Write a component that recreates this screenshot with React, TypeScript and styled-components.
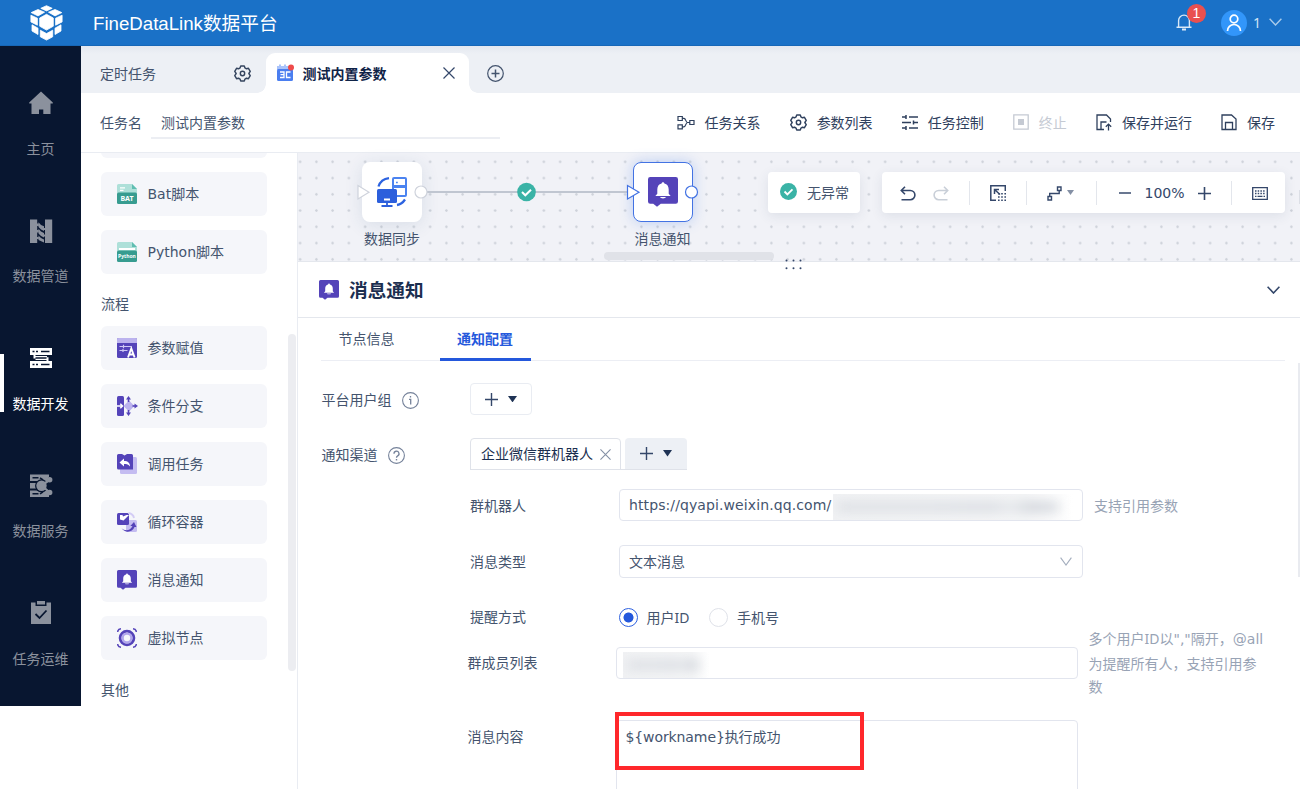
import React from "react";
import styled, { createGlobalStyle, css } from "styled-components";

const GlobalStyle = createGlobalStyle`
  * { box-sizing: border-box; }
  body {
    margin: 0;
    background: #fff;
    font-family: "Noto Sans", "Noto Sans CJK SC", sans-serif;
    font-size: 14px;
    line-height: 20px;
    color: #44546e;
    overflow: hidden;
  }
  svg { display: block; flex: none; }
`;

const Page = styled.div`
  width: 1300px;
  height: 789px;
  display: flex;
  flex-direction: column;
  overflow: hidden;
`;

/* ---------- header ---------- */
const Header = styled.header`
  height: 46px;
  flex: none;
  display: flex;
  align-items: center;
  padding: 0 18px 0 30px;
  background: #1a71c7;
  border-bottom: 1px solid #1667b8;
  color: #fff;
`;
const Brand = styled.h1`
  flex: 1;
  margin: 2px 0 0 30px;
  font: 400 18.67px/24px "Liberation Sans", "Noto Sans CJK SC", sans-serif;
`;
const BellButton = styled.div`
  position: relative;
  width: 18px;
  margin: -2px 28px 0 0;
  color: #d9e8f7;
`;
const CountBadge = styled.span`
  position: absolute;
  left: 12px;
  top: -9px;
  width: 19px;
  height: 19px;
  border-radius: 50%;
  background: #e9504f;
  color: #fff;
  font: 400 14px/19px "Liberation Sans", sans-serif;
  text-align: center;
`;
const Avatar = styled.div`
  width: 26px;
  height: 26px;
  border-radius: 50%;
  background: #3296fa;
  display: flex;
  align-items: center;
  justify-content: center;
`;
const UserName = styled.span`
  width: 8px;
  margin: 0 8px 0 6px;
  font-size: 14px;
  color: #d3e4f5;
`;
const UserArrow = styled.div`
  margin-top: -2px;
  color: #a9cbea;
`;

/* ---------- side navigation ---------- */
const Body = styled.div`
  flex: 1;
  min-height: 0;
  display: flex;
  align-items: flex-start;
`;
const SideNav = styled.nav`
  width: 81px;
  height: 660px;
  flex: none;
  background: #081630;
  overflow: hidden;
`;
const NavItem = styled.div<{ $active?: boolean }>`
  position: relative;
  height: 127.5px;
  padding-top: 45px;
  display: flex;
  flex-direction: column;
  align-items: center;
  gap: 23.5px;
  color: ${(p) => (p.$active ? "#fff" : "#8b919d")};
  ${(p) =>
    p.$active &&
    css`
      &::before {
        content: "";
        position: absolute;
        left: 0;
        top: 53px;
        width: 4px;
        height: 58px;
        background: #fff;
      }
    `}
`;

const Workspace = styled.main`
  flex: 1;
  min-width: 0;
  height: 743px;
  display: flex;
  flex-direction: column;
`;

/* ---------- task tabs ---------- */
const TabStrip = styled.div`
  height: 47px;
  flex: none;
  display: flex;
  align-items: center;
  padding: 7px 0 0 19px;
  background: linear-gradient(#e4e8f0, #edf0f5 8px, #edf0f5);
`;
const StripLabel = styled.span`
  width: 134px;
  padding-top: 2px;
`;
const StripGear = styled.div`
  color: #34445e;
`;
const TaskTab = styled.div`
  position: relative;
  width: 203px;
  height: 40px;
  margin: 0 18px 0 15px;
  padding: 0 14px 0 11px;
  display: flex;
  align-items: center;
  border-radius: 9px 9px 0 0;
  background: #fff;
  color: #0f2347;
  font-weight: 700;
  &::before,
  &::after {
    content: "";
    position: absolute;
    bottom: 0;
    width: 9px;
    height: 9px;
  }
  &::before {
    left: -9px;
    background: radial-gradient(circle at 0 0, transparent 8.5px, #fff 9px);
  }
  &::after {
    right: -9px;
    background: radial-gradient(circle at 100% 0, transparent 8.5px, #fff 9px);
  }
`;
const TaskTabTitle = styled.span`
  flex: 1;
  margin: 1px 0 0 8.5px;
`;

/* ---------- task toolbar ---------- */
const TaskBar = styled.div`
  height: 60px;
  flex: none;
  display: flex;
  align-items: center;
  padding: 0 25px 0 19px;
  border-bottom: 1px solid #e9ecf2;
`;
const TaskNameInput = styled.div`
  width: 349px;
  height: 32px;
  margin: 1px auto 0 9px;
  padding: 6px 10px 0;
  border-bottom: 2px solid #eceef3;
`;
const ToolList = styled.div`
  display: flex;
  gap: 29.1px;
`;
const Tool = styled.div<{ $disabled?: boolean }>`
  display: flex;
  align-items: center;
  gap: 10px;
  color: ${(p) => (p.$disabled ? "#c5cad3" : "#2f405d")};
`;

/* ---------- node palette ---------- */
const Split = styled.div`
  flex: 1;
  min-height: 0;
  display: flex;
  align-items: flex-start;
`;
const Palette = styled.aside`
  width: 216px;
  height: 553px;
  flex: none;
  display: flex;
  justify-content: space-between;
  padding: 0 1px 0 20px;
  overflow: hidden;
`;
const PaletteList = styled.div`
  width: 166px;
  margin-top: -39px;
  display: flex;
  flex-direction: column;
  gap: 14px;
`;
const PaletteItem = styled.div`
  height: 44px;
  flex: none;
  display: flex;
  align-items: center;
  padding: 0 16px;
  border-radius: 6px;
  background: #f5f6fa;
`;
const PaletteIcon = styled.span`
  width: 30.5px;
`;
const PaletteHeading = styled.div`
  height: 24px;
  flex: none;
  padding-top: 6px;
`;
const PaletteScroll = styled.div`
  width: 8px;
  height: 337px;
  margin-top: 181px;
  border-radius: 4px;
  background: #ecedf1;
`;

/* ---------- canvas ---------- */
const Right = styled.section`
  flex: 1;
  min-width: 0;
  height: 636px;
  display: flex;
  flex-direction: column;
  border-left: 1px solid #e9ecf2;
`;
const Canvas = styled.div`
  position: relative;
  height: 109px;
  flex: none;
  background-color: #f1f2f7;
  background-image: radial-gradient(circle at 50% 50%, #cdd1d9 0.9px, transparent 1.5px);
  background-size: 16.25px 16.25px;
  background-position: -6px 0.7px;
  border-bottom: 1px solid #e4e7ed;
`;
const NodeBox = styled.div<{ $x: number; $selected?: boolean }>`
  position: absolute;
  left: ${(p) => p.$x}px;
  top: 9px;
  width: 60px;
  height: 60px;
  display: flex;
  align-items: center;
  justify-content: center;
  border-radius: 8px;
  background: #fff;
  ${(p) =>
    p.$selected
      ? css`
          border: 1px solid #4373e3;
          box-shadow: 0 0 14px rgba(67, 125, 235, 0.32);
        `
      : css`
          box-shadow: 0 3px 18px rgba(40, 80, 120, 0.12);
        `}
`;
const NodeLabel = styled.div<{ $x: number }>`
  position: absolute;
  left: ${(p) => p.$x}px;
  top: 76px;
  width: 80px;
  text-align: center;
`;
const Wires = styled.svg`
  position: absolute;
  left: 1px;
  top: 0;
`;
const CanvasScroll = styled.div`
  position: absolute;
  left: 305.5px;
  top: 99px;
  width: 170.5px;
  height: 8px;
  border-radius: 4px;
  background: #e0e2e8;
`;
const CanvasSideScroll = styled.div`
  position: absolute;
  right: 0;
  top: 37px;
  width: 1px;
  height: 14px;
  background: #dcdfe6;
`;
const FloatingTools = styled.div`
  position: absolute;
  right: 15px;
  top: 19px;
  display: flex;
  gap: 22px;
`;
const FloatCard = styled.div`
  height: 41px;
  display: flex;
  align-items: center;
  border-radius: 4px;
  background: #fff;
  box-shadow: 0 3px 12px rgba(50, 65, 95, 0.1);
`;
const StatusCard = styled(FloatCard)`
  width: 92px;
  gap: 10px;
  padding: 1px 0 0 12px;
  svg { margin-top: -4px; }
`;
const ZoomCard = styled(FloatCard)`
  width: 403px;
  padding: 1px 17px 0 18px;
  justify-content: space-between;
  color: #34476a;
`;
const ToolPair = styled.div<{ $gap: number; $before?: number; $after?: number }>`
  display: flex;
  align-items: center;
  gap: ${(p) => p.$gap}px;
  padding: 0 ${(p) => p.$after ?? 0}px 0 ${(p) => p.$before ?? 0}px;
`;
const Divider = styled.i`
  width: 1px;
  height: 24px;
  background: #e3e6ec;
`;
const ZoomValue = styled.span`
  width: 41px;
  display: flex;
  justify-content: center;
  font-family: "DejaVu Sans", sans-serif;
  font-size: 14px;
`;
const Grip = styled.svg`
  position: absolute;
  left: 487px;
  top: 106px;
  z-index: 2;
`;

/* ---------- settings panel ---------- */
const PanelHead = styled.div`
  height: 56px;
  flex: none;
  display: flex;
  align-items: center;
  padding: 0 20px 0 21px;
  border-bottom: 1px solid #e4e7ed;
  color: #34476a;
`;
const PanelTitle = styled.h2`
  flex: 1;
  margin: 0 0 0 10px;
  font-size: 18.67px;
  line-height: 26px;
  font-weight: 700;
  color: #1c2f50;
`;
const PanelTabs = styled.div`
  height: 43px;
  flex: none;
  display: flex;
  margin: 0 15px 0 23px;
  border-bottom: 1px solid #eceef4;
`;
const PanelTab = styled.div<{ $active?: boolean }>`
  width: 91px;
  height: 43px;
  margin-right: 27.5px;
  padding-top: 11px;
  text-align: center;
  ${(p) =>
    p.$active &&
    css`
      color: #2458dc;
      font-weight: 700;
      border-bottom: 3px solid #2458dc;
    `}
`;
const FormWrap = styled.div`
  flex: 1;
  min-height: 0;
  display: flex;
  justify-content: space-between;
`;
const Form = styled.div`
  width: 985px;
  padding: 22px 0 0 23.5px;
`;
const Row = styled.div<{ $h: number; $gap: number; $indent?: number }>`
  height: ${(p) => p.$h}px;
  margin-bottom: ${(p) => p.$gap}px;
  padding-left: ${(p) => p.$indent ?? 0}px;
  display: flex;
  align-items: center;
`;
const FieldLabel = styled.label<{ $w: number; $drop?: boolean }>`
  width: ${(p) => p.$w}px;
  flex: none;
  display: flex;
  align-items: center;
  gap: 10px;
  padding-top: ${(p) => (p.$drop ? 2 : 0)}px;
`;
const AddButton = styled.button<{ $filled?: boolean }>`
  width: 62px;
  height: 32px;
  display: flex;
  align-items: center;
  justify-content: center;
  gap: 10px;
  padding: 0;
  font: inherit;
  color: #34476a;
  ${(p) =>
    p.$filled
      ? css`
          margin-left: 4.5px;
          background: #edf0f5;
          border: 0;
          border-bottom: 1px solid #dfe2e9;
          border-radius: 4px 4px 0 0;
        `
      : css`
          background: #fff;
          border: 1px solid #e9ecf2;
          border-radius: 4px;
        `}
`;
const Channels = styled.div`
  display: flex;
  height: 32px;
  background: linear-gradient(#dfe2e9, #dfe2e9) bottom / 100% 1px no-repeat;
`;
const ChannelTab = styled.div`
  width: 150.5px;
  height: 32px;
  display: flex;
  align-items: center;
  justify-content: space-between;
  padding: 0 9px 0 10px;
  border: 1px solid #dfe2e9;
  border-radius: 4px 4px 0 0;
  color: #1c2f50;
`;
const Field = styled.div<{ $w: number }>`
  width: ${(p) => p.$w}px;
  height: 32px;
  flex: none;
  display: flex;
  align-items: center;
  padding: 0 10px 0 9px;
  border: 1px solid #e2e5ee;
  border-radius: 4px;
  background: #fff;
`;
const Select = styled(Field)`
  height: 33px;
  justify-content: space-between;
  svg { color: #a3adbd; }
`;
const Latin = styled.span<{ $spacing?: number }>`
  font-family: "DejaVu Sans", "Noto Sans CJK SC", sans-serif;
  letter-spacing: ${(p) => p.$spacing ?? 0}px;
`;
const Url = styled(Latin)`
  width: 204px;
  flex: none;
  white-space: nowrap;
`;
const Redacted = styled.div<{ $w: number; $from: number; $shift?: number }>`
  width: ${(p) => p.$w}px;
  height: 26px;
  margin: 3px 0 0 ${(p) => p.$shift ?? 0}px;
  flex: none;
  overflow: hidden;
  display: flex;
  align-items: center;
  background: linear-gradient(90deg, #f1f2f4, #f5f6f7 80%, #fff);
  &::before {
    content: "";
    flex: 1;
    height: 10px;
    margin: 0 ${(p) => p.$from}px 0 4px;
    background: linear-gradient(90deg, #dcdfe4, #dcdfe4 40%, #d8dbe1 70%, #e4e6ea 78%, #cdd1d8 88%, #d8dbe1);
    filter: blur(6px);
  }
`;
const Hint = styled.span`
  margin: 1px 0 0 11px;
  color: #98a3b5;
`;
const LongHint = styled.div`
  width: 180px;
  margin-left: 10.5px;
  line-height: 23.4px;
  color: #98a3b5;
`;
const Radio = styled.span<{ $on?: boolean }>`
  width: 19px;
  height: 19px;
  border-radius: 50%;
  border: 1px solid ${(p) => (p.$on ? "#2f62e0" : "#dfe2e9")};
  background: ${(p) =>
    p.$on ? "radial-gradient(circle, #2458dc 4.6px, #fff 5.4px)" : "#fff"};
`;
const RadioText = styled.span`
  margin: 1px 19.5px 0 9px;
`;
const ContentRow = styled.div`
  display: flex;
  padding-left: 146px;
`;
const ContentLabel = styled.label`
  width: 148.5px;
  padding-top: 7px;
`;
const TextArea = styled.div`
  position: relative;
  width: 462px;
  height: 90px;
  padding: 6px 8.5px;
  border: 1px solid #e2e5ee;
  border-radius: 4px;
`;
const Highlight = styled.div`
  position: absolute;
  left: -2px;
  top: -9px;
  width: 249px;
  height: 58px;
  border: 4px solid #ff272b;
`;
const PanelScroll = styled.div`
  width: 2px;
  height: 214px;
  margin-top: 2px;
  background: #e9ebf0;
`;

/* ---------- icons ---------- */
const line = (w = 1.4) => ({
  fill: "none",
  stroke: "currentColor",
  strokeWidth: w,
});

const Logo = () => (
  <svg width="33" height="36" viewBox="0 0 33 36" fill="#fff" stroke="#fff" strokeWidth=".8" strokeLinejoin="round">
    <path d="M16.500 9.300 23.300 13v8.200L16.500 25.100 9.700 21.200V13z" />
    <path d="M10.800 3.300 16.500.7l5.700 2.600L16.500 5.900z" />
    <path d="M1.200 7.600 8 4.500 14.500 7.200 8 10.900z" />
    <path d="M31.800 7.600 25 4.500 18.500 7.200 25 10.900z" />
    <path d="M.9 10.200 7.400 13.200V20.200L.9 16.900z" />
    <path d="M32.100 10.200 25.600 13.200V20.200L32.100 16.900z" />
    <path d="M2 19.800 8 23.200V29.500L2 26z" />
    <path d="M31 19.800 25 23.200V29.500L31 26z" />
    <path d="M10.300 25.200 16.500 28.600 22.700 25.200V31.800L16.500 35.100 10.300 31.800z" />
  </svg>
);
const Bell = () => (
  <svg width="18" height="18" viewBox="0 0 18 18" {...line(1.4)}>
    <path d="M1.500 14.200h15M3.600 14V7.500a5.400 5.400 0 0 1 10.800 0V14" />
    <path d="M7 16.500h4" strokeWidth="2" />
  </svg>
);
const Person = () => (
  <svg width="16" height="18" viewBox="0 0 16 18" {...line(1.7)}>
    <circle cx="8" cy="5" r="3.8" />
    <path d="M1.500 17a6.500 6.500 0 0 1 13 0" />
  </svg>
);
const Chevron = ({ w = 13, h = 8, sw = 1.4 }: { w?: number; h?: number; sw?: number }) => (
  <svg width={w} height={h} viewBox={`0 0 ${w} ${h}`} {...line(sw)}>
    <path d={`M.6.7 ${w / 2} ${h - 1} ${w - 0.6}.7`} />
  </svg>
);
const HomeIcon = () => (
  <svg width="24" height="24" viewBox="0 0 24 24" fill="currentColor">
    <path d="M12 .5 23.800 11.500V12.500H21.500V23H14.300V18.500H10V23H2.500V12.500H.2V11.500z" />
  </svg>
);
const PipeIcon = () => (
  <svg width="24" height="24" viewBox="0 0 24 24">
    <path fill="currentColor" d="M1 .5h7.200V24H1zM16 .5h7.200V24H16z" />
    <path fill="currentColor" d="M9.500 3.200 12 6l3 1.200V12L12 10.500 9.500 8zM9.500 9.800 12 12.500l3 1.500v4.500L12 17l-2.500-2.500zM9.500 16.500 12 19l3 1.500v3L9.500 21z" />
    <path fill="currentColor" d="M8 4.500h1.800v2.500H8zM14.500 9H16v2h-1.500zM8 11h1.800v2.500H8zM14.500 15.500H16v2h-1.500zM8 18h1.800v2H8z" />
  </svg>
);
const DevIcon = () => (
  <svg width="24" height="24" viewBox="0 0 24 24">
    <path fill="currentColor" d="M1 2h22v7H1zM1 15h22v7H1zM5 10h13v1.300H5zM6.500 12.700H19V14H6.500z" />
    <path fill="currentColor" d="M4.500 8.500h2v4h-2zM17.500 11.300h2V16h-2z" />
    <path d="M3.500 5.500h2M7 5.500h2M12 5.500h8.500M3.500 18.500h2M7 18.500h2M12 18.500h8.500" stroke="#081630" strokeWidth="1.700" />
  </svg>
);
const ServiceIcon = () => (
  <svg width="24" height="24" viewBox="0 0 24 24">
    <path fill="currentColor" d="M1 .5h20l-3 6.500H1zM1 9h6v5.500H1zM1 16.500h17l3 6.500H1z" />
    <path d="M3.500 3.800h6M11 3.800l3 2M3.500 19.800h6M11 19.800l3-2" stroke="#081630" strokeWidth="1.600" />
    <circle cx="12.500" cy="11.800" r="6.500" fill="#081630" />
    <path fill="#081630" d="M20 0h4v24h-4z" />
    <circle cx="12.500" cy="11.800" r="5.200" fill="currentColor" />
    <path d="m14 10.500 6.500-4.500M14 12.500l6.500 6" stroke="currentColor" strokeWidth="2.200" />
    <circle cx="20.700" cy="5.800" r="2.700" fill="currentColor" />
    <circle cx="20.700" cy="18.500" r="2.700" fill="currentColor" />
  </svg>
);
const OpsIcon = () => (
  <svg width="24" height="24" viewBox="0 0 24 24">
    <path fill="currentColor" d="M2 1.500h4.500V5h11V1.500H22v21.500H2z" />
    <path fill="currentColor" d="M8 0h8v3.500H8z" />
    <path d="m6.500 13 4 4 7-7.500" fill="none" stroke="#081630" strokeWidth="1.800" />
  </svg>
);
const Gear = ({ size = 17 }: { size?: number }) => (
  <svg width={size} height={size} viewBox="0 0 18 18" {...line(1.5)} strokeLinejoin="round">
    <path d="M7.100 1h3.800l.7 2.100 1.600.9 2.100-.5 1.900 3.300L15.700 9l1.500 2.200-1.900 3.300-2.100-.5-1.600.9-.7 2.100H7.100l-.7-2.100-1.600-.9-2.100.5L.8 11.200 2.300 9 .8 6.800l1.900-3.300 2.100.5 1.600-.9z" />
    <circle cx="9" cy="9" r="2.300" />
  </svg>
);
const TaskIcon = () => (
  <svg width="17" height="18" viewBox="0 0 17 18">
    <path fill="#a9c3fa" d="M0 2h2V.5h2V2h3V.5h2V2h6v4H0z" />
    <rect y="5" width="16" height="12" rx="1.500" fill="#4a7ef0" />
    <path d="M3 8h4v5.500H3M3.500 10.700H7M13.500 8H9.500v5.500h4" fill="none" stroke="#fff" strokeWidth="1.300" />
    <circle cx="14" cy="3.500" r="3" fill="#ee4b4b" />
  </svg>
);
const Cross = ({ size = 12, w = 1.2, color = "#34476a" }: { size?: number; w?: number; color?: string }) => (
  <svg width={size} height={size} viewBox="0 0 12 12" {...line(w)} color={color}>
    <path d="m.5.5 11 11M11.500.5l-11 11" />
  </svg>
);
const PlusCircle = () => (
  <svg width="17" height="17" viewBox="0 0 17 17" {...line(1.2)}>
    <circle cx="8.500" cy="8.500" r="7.800" />
    <path d="M8.500 4.500v8M4.500 8.500h8" strokeWidth="1.500" />
  </svg>
);
const RelationIcon = () => (
  <svg width="18" height="16" viewBox="0 0 18 16" {...line(1.2)}>
    <path d="M1 1.500h4.300v4H1zM1 9.800h4.300v4H1zM12.800 5.500h4.200v4h-4.200zM5.300 3.300h1.700c2 0 1.500 4.200 3.500 4.200h2.300M5.300 11.800h1.700c2 0 1.500-4.300 3.500-4.300" />
  </svg>
);
const ControlIcon = () => (
  <svg width="16" height="16" viewBox="0 0 16 16" {...line(1.5)}>
    <path d="M0 2h4.500M7 2h9M0 7.500h9M11.500 7.500H16M0 13h4.500M7 13h9M4 0v4M11.500 5.500v4M4 11v4" />
  </svg>
);
const StopIcon = () => (
  <svg width="16" height="17" viewBox="0 0 16 17" {...line(1.3)}>
    <path d="M.8.8h14.400v14.400H.8z" />
    <path d="M5 5h6v6H5z" fill="currentColor" stroke="none" />
  </svg>
);
const SaveIcon = ({ run }: { run?: boolean }) => (
  <svg width="16" height="18" viewBox="0 0 16 18" {...line(1.3)}>
    {run ? (
      <>
        <path d="M8 15.500H1V1h9.500L14.500 5v3M5 15V8h5.500" />
        <path d="M12.500 16.500v-6M9.800 12.800l2.700-2.700 2.700 2.700" />
      </>
    ) : (
      <path d="M1 1h9.500L15 5v10.500H1zM4.500 15.500V8.500h7v7" />
    )}
  </svg>
);
const CheckDot = ({ size = 18 }: { size?: number }) => (
  <svg width={size} height={size} viewBox="0 0 18 18">
    <circle cx="9" cy="9" r="9" fill="#3ab3a6" />
    <path d="m4.800 9 3 3 5.400-5.300" fill="none" stroke="#fff" strokeWidth="2" />
  </svg>
);
const UndoIcon = ({ flip }: { flip?: boolean }) => (
  <svg width="16" height="15" viewBox="0 0 16 15" {...line(1.6)} color={flip ? "#c9cfd8" : "#34476a"}>
    <g transform={flip ? "matrix(-1 0 0 1 16 0)" : undefined}>
      <path d="M5 .8 1.300 4.500 5 8.200M1.300 4.500h9a4.600 4.600 0 0 1 0 9.200H1.500" />
    </g>
  </svg>
);
const FitIcon = () => (
  <svg width="16" height="16" viewBox="0 0 16 16" {...line(1.5)}>
    <path d="M15.300 6V.8H.8v14.400H6" />
    <path d="M4.500 9V4.500H9M4.500 4.500l5.500 5" />
    <path d="M8 8.800h8M8 12h8M8 15.200h8" strokeDasharray="1.600 1.600" />
  </svg>
);
const PathIcon = () => (
  <svg width="15" height="15" viewBox="0 0 15 15" {...line(1.4)}>
    <path d="M10.500 1h3.500v3.500h-3.500zM1 10.500h3.500V14H1zM2.700 10.500v-3h9.500v-3" />
  </svg>
);
const Caret = ({ w = 9, color = "#1f3355" }: { w?: number; color?: string }) => (
  <svg width={w} height={w * 0.72} viewBox="0 0 10 7" fill={color}>
    <path d="M0 0h10L5 7z" />
  </svg>
);
const Plus = ({ size = 13, w = 1.4, minus }: { size?: number; w?: number; minus?: boolean }) => (
  <svg width={size} height={size} viewBox="0 0 13 13" {...line(w)}>
    <path d={minus ? "M0 6.500h13" : "M0 6.500h13M6.500 0v13"} />
  </svg>
);
const KeyboardIcon = () => (
  <svg width="16" height="13" viewBox="0 0 16 13" {...line(1.3)}>
    <path d="M.7.7h14.600v11.600H.7z" />
    <path d="M3 4h10M3 6.500h10" strokeDasharray="1.500 1.200" />
    <path d="M3 9.300h1.500M5.500 9.300h5M11.500 9.300H13" />
  </svg>
);
const CircleMark = ({ q }: { q?: boolean }) => (
  <svg width="17" height="17" viewBox="0 0 17 17" {...line(1.1)} color="#75829a">
    <circle cx="8.500" cy="8.500" r="7.900" />
    {q ? (
      <>
        <path d="M6 6.800a2.500 2.500 0 1 1 3.700 2.100c-.8.500-1.200.8-1.200 1.900" strokeWidth="1.300" />
        <path d="M8.500 12v1.400" strokeWidth="1.400" />
      </>
    ) : (
      <path d="M8.500 3.900v1.500M7 7.300h1.700v5.200" strokeWidth="1.300" />
    )}
  </svg>
);
const ScriptIcon = ({ label, size }: { label: string; size: number }) => (
  <svg width="20" height="20" viewBox="0 0 20 20">
    <path fill="#aee0d9" d="M1.500 0H15l5 5v4H0V1.500A1.500 1.500 0 0 1 1.500 0z" />
    <path fill="#5fbdb1" d="M15 0v5h5z" />
    {label === "BAT" && <path stroke="#fff" strokeWidth="1.300" d="M3 3.800h5M3 6.300h3.500" />}
    {label !== "BAT" && <path stroke="#fff" strokeWidth="2" d="M2 7h16" />}
    <rect y="8.500" width="20" height="11.500" rx="1.500" fill="#379c90" />
    <text x="10" y={label === "BAT" ? 16.8 : 15.8} textAnchor="middle" fontSize={size} fontWeight="700" fill="#fff" fontFamily="Noto Sans">
      {label}
    </text>
  </svg>
);
const AssignIcon = () => (
  <svg width="20" height="20" viewBox="0 0 20 20">
    <rect width="20" height="20" rx="1.500" fill="#5443b9" />
    <path d="M1.500 0h17A1.500 1.500 0 0 1 20 1.500V5H0V1.500A1.500 1.500 0 0 1 1.500 0z" fill="#bcb3ee" />
    <path d="M2.500 8.500h12M2.500 12.500h8M6.500 6.800v3.400M6 11v3" stroke="#cfc8f5" strokeWidth="1.200" />
    <path d="m11 19.500 3.300-9 3.300 9M12.200 16.500h4.200" stroke="#fff" strokeWidth="1.900" fill="none" />
  </svg>
);
const BranchIcon = () => (
  <svg width="21" height="20" viewBox="0 0 21 20">
    <rect width="7" height="20" rx="1.500" fill="#5443b9" />
    <path d="M0 10h5M3.300 7.800 5.500 10l-2.200 2.200" stroke="#fff" strokeWidth="1.500" fill="none" />
    <path d="m12 4.500 5.500 5.500-5.500 5.500L6.500 10z" fill="#bcb3ee" />
    <path d="M11.500 0 14 3.500h-1.700V6h-1.600V3.500H9zM11.500 20 14 16.500h-1.700V14h-1.600v2.500H9zM21 10l-3.500-2.600v1.800h-2v1.600h2v1.800z" fill="#5443b9" />
  </svg>
);
const CallIcon = () => (
  <svg width="20" height="20" viewBox="0 0 20 20">
    <rect x="3" y="3" width="17" height="17" rx="1.500" fill="#c4bcf1" />
    <path d="M1.500 0H5l2.500 1.500L10 0h4.500A1.500 1.500 0 0 1 16 1.500v14H1.500A1.500 1.500 0 0 1 0 14V1.500A1.500 1.500 0 0 1 1.500 0z" fill="#5443b9" />
    <path d="M2.500 8.500 7 4.500V7c4 0 6 2 6 5.500C11.500 10.500 10 10 7 10v2.500z" fill="#fff" />
  </svg>
);
const LoopIcon = () => (
  <svg width="20" height="20" viewBox="0 0 20 20">
    <rect x="9" y="8" width="11" height="12" rx="1.500" fill="#c4bcf1" />
    <rect y="1" width="12" height="12" rx="1.500" fill="#5443b9" />
    <path d="M3 3h2.500l.5 1.500L9.500 3H12L6.500 8.500 3 7.500z" fill="#fff" />
    <path d="M11.500 1c3 .5 5 2 5.500 5" stroke="#d3ccf5" strokeWidth="1.800" fill="none" />
    <path d="M4.500 16c3 3.500 9 3 11-2h-2.200L17 10l2.500 5h-2c-2 5-9 7-13 1z" fill="#5443b9" />
  </svg>
);
const NoticeIcon = ({ size = 20 }: { size?: number }) => (
  <svg width={size} height={size} viewBox="0 0 20 20">
    <path
      d="M1.500 0h17A1.500 1.500 0 0 1 20 1.500v14.800a1.500 1.500 0 0 1-1.500 1.500H8.500L6 19.800 3.500 17.800h-2A1.500 1.500 0 0 1 0 16.300V1.500A1.500 1.500 0 0 1 1.500 0z"
      fill="#5443b9"
    />
    <path d="M10 3.500c.6 0 .9.4.9.9 2 .4 2.900 2 2.900 4v2.800l1.300 1.500H4.900l1.300-1.500V8.400c0-2 .9-3.600 2.900-4 0-.5.300-.9.900-.9zM8 13.400h4c-.3 1.200-3.700 1.200-4 0z" fill="#fff" />
  </svg>
);
const VirtualIcon = () => (
  <svg width="20" height="20" viewBox="0 0 20 20" fill="none">
    <circle cx="10" cy="10" r="6.900" stroke="#5443b9" strokeWidth="2.800" />
    <circle cx="10" cy="10" r="4.400" stroke="#b1a6ec" strokeWidth="2.400" />
    <path d="M.8 4V3Q1.500 1 4 .8M16 .8Q18.500 1 19.200 3V4M.8 16v1q.7 2 3.200 2.200M19.200 16v1q-.7 2-3.200 2.200" stroke="#5443b9" strokeWidth="1.500" />
  </svg>
);
const SyncIcon = () => (
  <svg width="30" height="30" viewBox="0 0 30 30" fill="none">
    <path d="M1.500 9.500C3 5 7 1.800 12 1.200M20 28c3-.5 6-2.500 8-5.500" stroke="#2c63e0" strokeWidth="2.300" />
    <rect x="16" y="1" width="13" height="18" rx="1" stroke="#4b83f0" strokeWidth="2" />
    <path d="M15.500 9.500h14" stroke="#4b83f0" strokeWidth="3" />
    <path d="M19 5.500h1.800" stroke="#4b83f0" strokeWidth="1.600" />
    <rect y="12" width="20" height="14" rx="1.500" fill="#2c5fdc" />
    <path d="M7 22.500h6" stroke="#fff" strokeWidth="2" />
    <path d="M10 26v3M4.500 29h11" stroke="#2c5fdc" strokeWidth="1.800" />
  </svg>
);

/* ---------- data ---------- */
const navItems = [
  { label: "主页", icon: <HomeIcon /> },
  { label: "数据管道", icon: <PipeIcon /> },
  { label: "数据开发", icon: <DevIcon />, active: true },
  { label: "数据服务", icon: <ServiceIcon /> },
  { label: "任务运维", icon: <OpsIcon /> },
];
const tools = [
  { label: "任务关系", icon: <RelationIcon /> },
  { label: "参数列表", icon: <Gear /> },
  { label: "任务控制", icon: <ControlIcon /> },
  { label: "终止", icon: <StopIcon />, disabled: true },
  { label: "保存并运行", icon: <SaveIcon run /> },
  { label: "保存", icon: <SaveIcon /> },
];
const scripts = [
  { label: "Bat脚本", icon: <ScriptIcon label="BAT" size={7} /> },
  { label: "Python脚本", icon: <ScriptIcon label="Python" size={5} /> },
];
const flows = [
  { label: "参数赋值", icon: <AssignIcon /> },
  { label: "条件分支", icon: <BranchIcon /> },
  { label: "调用任务", icon: <CallIcon /> },
  { label: "循环容器", icon: <LoopIcon /> },
  { label: "消息通知", icon: <NoticeIcon /> },
  { label: "虚拟节点", icon: <VirtualIcon /> },
];

const PaletteEntry = ({ label, icon }: { label: string; icon: React.ReactNode }) => (
  <PaletteItem>
    <PaletteIcon>{icon}</PaletteIcon>
    <Latin>{label}</Latin>
  </PaletteItem>
);

export default function App() {
  return (
    <Page>
      <GlobalStyle />
      <Header>
        <Logo />
        <Brand>FineDataLink数据平台</Brand>
        <BellButton>
          <Bell />
          <CountBadge>1</CountBadge>
        </BellButton>
        <Avatar>
          <Person />
        </Avatar>
        <UserName>1</UserName>
        <UserArrow>
          <Chevron />
        </UserArrow>
      </Header>
      <Body>
        <SideNav>
          {navItems.map((n) => (
            <NavItem key={n.label} $active={n.active}>
              {n.icon}
              <span>{n.label}</span>
            </NavItem>
          ))}
        </SideNav>
        <Workspace>
          <TabStrip>
            <StripLabel>定时任务</StripLabel>
            <StripGear>
              <Gear />
            </StripGear>
            <TaskTab>
              <TaskIcon />
              <TaskTabTitle>测试内置参数</TaskTabTitle>
              <Cross />
            </TaskTab>
            <PlusCircle />
          </TabStrip>
          <TaskBar>
            <span>任务名</span>
            <TaskNameInput>测试内置参数</TaskNameInput>
            <ToolList>
              {tools.map((t) => (
                <Tool key={t.label} $disabled={t.disabled}>
                  {t.icon}
                  <span>{t.label}</span>
                </Tool>
              ))}
            </ToolList>
          </TaskBar>
          <Split>
            <Palette>
              <PaletteList>
                <PaletteItem />
                {scripts.map((s) => (
                  <PaletteEntry key={s.label} {...s} />
                ))}
                <PaletteHeading>流程</PaletteHeading>
                {flows.map((s) => (
                  <PaletteEntry key={s.label} {...s} />
                ))}
                <PaletteHeading>其他</PaletteHeading>
              </PaletteList>
              <PaletteScroll />
            </Palette>
            <Right>
              <Canvas>
                <NodeBox $x={64}>
                  <SyncIcon />
                </NodeBox>
                <NodeLabel $x={54}>数据同步</NodeLabel>
                <NodeBox $x={335} $selected>
                  <NoticeIcon size={30} />
                </NodeBox>
                <NodeLabel $x={324.5}>消息通知</NodeLabel>
                <Wires width="480" height="80" viewBox="0 0 480 80" fill="#fff">
                  <path d="M128 39h202" stroke="#c0c6d1" strokeWidth="2" />
                  <path d="M59 32.500v13.500l11-6.800z" stroke="#cfd3dc" strokeWidth="1.200" />
                  <circle cx="122" cy="39" r="6" stroke="#cfd3dc" strokeWidth="1.200" />
                  <path d="M328.500 32.500v13.500l11.500-6.800z" stroke="#4373e3" strokeWidth="1.200" />
                  <circle cx="392.500" cy="39" r="6" stroke="#4373e3" strokeWidth="1.200" />
                  <circle cx="227.500" cy="39" r="9.300" fill="#3ab3a6" />
                  <path d="m223 39 3.300 3.300 5.700-5.600" fill="none" stroke="#fff" strokeWidth="2" />
                </Wires>
                <FloatingTools>
                  <StatusCard>
                    <CheckDot size={17} />
                    <span>无异常</span>
                  </StatusCard>
                  <ZoomCard>
                    <ToolPair $gap={17}>
                      <UndoIcon />
                      <UndoIcon flip />
                    </ToolPair>
                    <Divider />
                    <FitIcon />
                    <Divider />
                    <ToolPair $gap={5} $after={2}>
                      <PathIcon />
                      <Caret w={7} color="#8490a5" />
                    </ToolPair>
                    <Divider />
                    <ToolPair $gap={13} $before={2}>
                      <Plus minus w={1.6} size={12} />
                      <ZoomValue>100%</ZoomValue>
                      <Plus w={1.6} size={13} />
                    </ToolPair>
                    <Divider />
                    <KeyboardIcon />
                  </ZoomCard>
                </FloatingTools>
                <CanvasScroll />
                <CanvasSideScroll />
                <Grip width="18" height="12" viewBox="0 0 18 12" fill="#34476a">
                  {[1.5, 8.5, 15.5].map((x) =>
                    [1.5, 9.3].map((y) => <circle key={`${x}-${y}`} cx={x} cy={y} r="1" />)
                  )}
                </Grip>
              </Canvas>
              <PanelHead>
                <NoticeIcon />
                <PanelTitle>消息通知</PanelTitle>
                <Chevron w={13} h={8} sw={1.6} />
              </PanelHead>
              <PanelTabs>
                <PanelTab>节点信息</PanelTab>
                <PanelTab $active>通知配置</PanelTab>
              </PanelTabs>
              <FormWrap>
                <Form>
                  <Row $h={32} $gap={23}>
                    <FieldLabel $w={148.5} $drop>
                      平台用户组
                      <CircleMark />
                    </FieldLabel>
                    <AddButton>
                      <Plus />
                      <Caret />
                    </AddButton>
                  </Row>
                  <Row $h={32} $gap={19}>
                    <FieldLabel $w={148.5} $drop>
                      通知渠道
                      <CircleMark q />
                    </FieldLabel>
                    <Channels>
                      <ChannelTab>
                        企业微信群机器人
                        <Cross size={11} color="#8490a5" />
                      </ChannelTab>
                      <AddButton $filled>
                        <Plus />
                        <Caret />
                      </AddButton>
                    </Channels>
                  </Row>
                  <Row $h={32} $gap={24} $indent={148.5}>
                    <FieldLabel $w={149} $drop>
                      群机器人
                    </FieldLabel>
                    <Field $w={464}>
                      <Url $spacing={0.1}>https://qyapi.weixin.qq.com/</Url>
                      <Redacted $w={240} $from={14} />
                    </Field>
                    <Hint>支持引用参数</Hint>
                  </Row>
                  <Row $h={33} $gap={23} $indent={148.5}>
                    <FieldLabel $w={149}>消息类型</FieldLabel>
                    <Select $w={464}>
                      文本消息
                      <Chevron w={12} h={9} sw={1.1} />
                    </Select>
                  </Row>
                  <Row $h={32} $gap={14} $indent={148.5}>
                    <FieldLabel $w={148.5}>提醒方式</FieldLabel>
                    <Radio $on />
                    <RadioText>用户ID</RadioText>
                    <Radio />
                    <RadioText>手机号</RadioText>
                  </Row>
                  <Row $h={32} $gap={41} $indent={146}>
                    <FieldLabel $w={148.5}>群成员列表</FieldLabel>
                    <Field $w={462}>
                      <Redacted $w={86} $from={10} $shift={-3} />
                    </Field>
                    <LongHint>
                      多个用户ID以<Latin>","</Latin>隔开，<Latin>@all</Latin>为提醒所有人，支持引用参数
                    </LongHint>
                  </Row>
                  <ContentRow>
                    <ContentLabel>消息内容</ContentLabel>
                    <TextArea>
                      <Latin $spacing={-0.1}>{"${workname}执行成功"}</Latin>
                      <Highlight />
                    </TextArea>
                  </ContentRow>
                </Form>
                <PanelScroll />
              </FormWrap>
            </Right>
          </Split>
        </Workspace>
      </Body>
    </Page>
  );
}
